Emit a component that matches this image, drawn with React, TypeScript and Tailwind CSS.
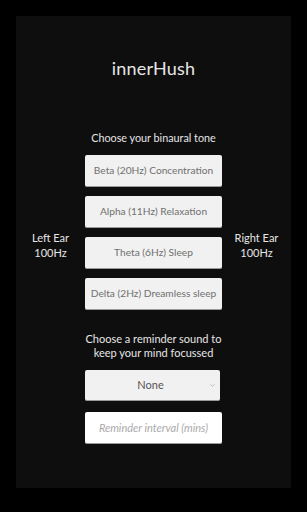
import { ChevronDown } from "lucide-react";

const tones = [
  "Beta (20Hz) Concentration",
  "Alpha (11Hz) Relaxation",
  "Theta (6Hz) Sleep",
  "Delta (2Hz) Dreamless sleep",
];

export default function App() {
  return (
    <div className="h-[512px] w-[307px] bg-black p-4 font-['Lato','Noto_Sans',sans-serif]">
      <div className="flex h-[472px] flex-col items-center bg-[#0e0e0e] text-[#e6e6e6]">
        <h1 className="mt-[40px] text-[18px] leading-6 tracking-[0.2px]">innerHush</h1>

        <p className="mt-[50px] text-[10.8px] leading-4">Choose your binaural tone</p>

        <div className="mt-[9px] flex w-full">
          <div className="flex w-[69px] items-center justify-center">
            <div className="mt-6 text-center text-[11px] leading-[15px]">
              Left Ear
              <br />
              100Hz
            </div>
          </div>
          <div className="flex w-[137px] flex-col gap-[9px]">
            {tones.map((t) => (
              <button
                key={t}
                className="h-8 w-full whitespace-nowrap rounded-[2px] border-b border-[#9a9a9a] bg-[#f1f1f1] text-center text-[10.2px] text-[#707070]"
              >
                {t}
              </button>
            ))}
          </div>
          <div className="flex flex-1 items-center justify-center">
            <div className="mt-6 text-center text-[11px] leading-[15px]">
              Right Ear
              <br />
              100Hz
            </div>
          </div>
        </div>

        <p className="mt-[22px] text-center text-[11px] leading-[14px]">
          Choose a reminder sound to
          <br />
          keep your mind focussed
        </p>

        <div className="relative mt-[10px] ml-[-2px] h-[31px] w-[135px] rounded-[2px] border-b border-[#9a9a9a] bg-[#f1f1f1]">
          <div className="flex h-full items-center justify-center pr-1 text-[11px] text-[#555]">None</div>
          <ChevronDown className="absolute right-[4px] top-[12px] h-[7px] w-[7px] text-[#999]" strokeWidth={2} />
        </div>

        <input
          placeholder="Reminder interval (mins)"
          className="mt-[11px] h-8 w-[137px] rounded-[2px] border-b border-[#9a9a9a] bg-white text-center text-[11px] italic text-[#555] outline-none placeholder:text-[#aaaaaa]"
        />
      </div>
    </div>
  );
}
